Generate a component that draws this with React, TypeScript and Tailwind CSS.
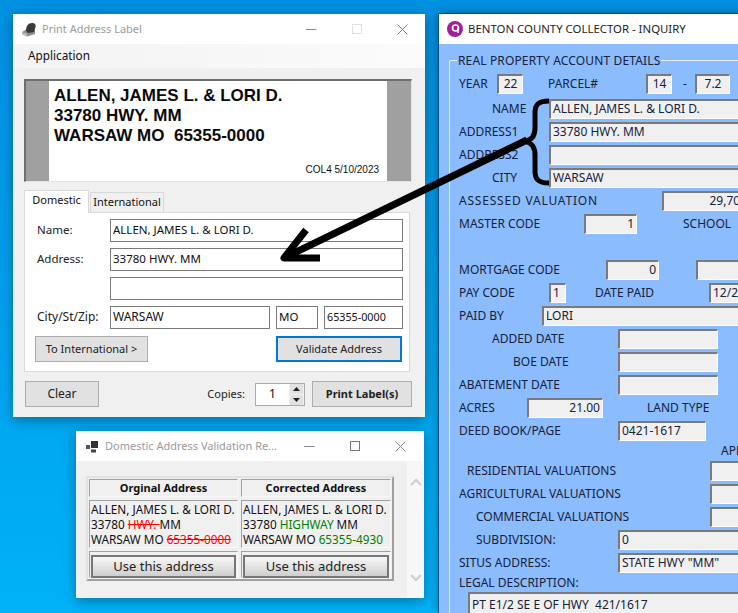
import React from 'react';

const ui = { fontFamily: '"Noto Sans", sans-serif' };
const arial = { fontFamily: '"Liberation Sans", sans-serif' };

const TitleButtons = ({ maxClass, gap }: { maxClass: string; gap: string }) => (
  <div className={`flex items-center ${gap}`}>
    <svg width="11" height="11" viewBox="0 0 11 11"><path d="M0 5.5H10.5" stroke="#8a8a8a" strokeWidth="1" /></svg>
    <div className={`h-[10px] w-[10px] border ${maxClass}`} />
    <svg width="11" height="11" viewBox="0 0 11 11"><path d="M0.5 0.5L10.5 10.5M10.5 0.5L0.5 10.5" stroke="#808080" strokeWidth="1" /></svg>
  </div>
);

const TextBox = ({ value, className }: { value?: string; className: string }) => (
  <div className={`flex h-[23px] items-center border border-[#7a7a7a] bg-white px-[2px] pb-px text-[#111] ${className}`}>{value}</div>
);

const Btn = ({ children, className }: { children: React.ReactNode; className: string }) => (
  <button className={`h-[26px] bg-[#e1e1e1] text-[#222] ${className}`}>{children}</button>
);

const LabelWindow = () => (
  <div style={ui} className="absolute left-[13px] top-[14px] flex h-[403px] w-[412px] flex-col bg-[#f0f0f0] shadow-[0_3px_12px_rgba(0,0,0,0.35)]">
    <div className="flex h-[30px] items-center justify-between bg-white pl-[8px] pr-[17px]">
      <div className="flex items-center gap-[5px]">
        <svg width="16" height="15" viewBox="0 0 16 15">
          <path d="M1 10L6 7L14 8.5V12L6 14.5L1 12Z" fill="#8c8c8c" />
          <path d="M5 9C5 4 7 1 11 1C14 1 15 3 14.5 5L13 10L7 11Z" fill="#3a3a3a" />
          <path d="M1 10L6 11.5V14.5L1 12Z" fill="#b5b5b5" />
        </svg>
        <span className="text-[11px] text-[#9a9a9a]">Print Address Label</span>
      </div>
      <TitleButtons maxClass="border-[#e2e2e2]" gap="gap-[35px]" />
    </div>
    <div className="flex h-[24px] items-center bg-gradient-to-r from-[#f3f3f3] to-[#fbfbfb] pl-[15px] text-[11.75px] text-[#111]">Application</div>

    <div className="mx-[11px] mt-[11px] flex h-[103px] w-[388px] border-b border-l-2 border-r border-t-2 border-b-[#e4e4e4] border-l-[#6e6e6e] border-r-[#e4e4e4] border-t-[#6e6e6e] bg-[#a0a0a0]">
      <div className="ml-[23px] flex w-[338px] flex-col bg-white pl-[5px] pr-[8px]" style={arial}>
        <div className="mt-[5px] text-[17px] font-bold leading-[20px] text-[#0a0a0a]">
          <div>ALLEN, JAMES L. &amp; LORI D.</div>
          <div>33780 HWY. MM</div>
          <div>WARSAW MO&nbsp; 65355-0000</div>
        </div>
        <div className="mb-[5px] mt-auto text-right text-[10px] leading-[12px] text-[#111]">COL4 5/10/2023</div>
      </div>
    </div>

    <div className="mx-[11px] mt-[8px] flex h-[22px] items-end text-[11px] text-[#111]">
      <div className="z-10 -mb-px flex h-[23px] w-[65px] items-center justify-center border border-b-0 border-[#d9d9d9] bg-white pb-[3px]">Domestic</div>
      <div className="ml-px flex h-[20px] w-[74px] items-center justify-center border border-b-0 border-[#d9d9d9] bg-[#f0f0f0]">International</div>
    </div>
    <div className="mx-[11px] flex h-[160px] w-[386px] flex-col gap-[6px] border border-[#d9d9d9] bg-white pl-[12px] pr-[6px] pt-[6px] text-[11.5px] text-[#222]">
      <div className="flex items-center">
        <span className="-mt-[2px] w-[73px]">Name:</span>
        <TextBox value="ALLEN, JAMES L. & LORI D." className="w-[293px]" />
      </div>
      <div className="flex items-center">
        <span className="-mt-[2px] w-[73px]">Address:</span>
        <TextBox value="33780 HWY. MM" className="w-[293px]" />
      </div>
      <div className="flex items-center">
        <span className="w-[73px]" />
        <TextBox className="w-[293px]" />
      </div>
      <div className="flex items-center">
        <span className="-mt-[2px] w-[73px] text-[12px]">City/St/Zip:</span>
        <TextBox value="WARSAW" className="w-[160px] text-[12px]" />
        <TextBox value="MO" className="ml-[6px] w-[42px]" />
        <TextBox value="65355-0000" className="ml-[6px] w-[79px] text-[10.75px]" />
      </div>
      <div className="-ml-[2px] mt-px flex justify-between pr-px text-[11px]">
        <Btn className="w-[113px] border border-[#adadad]">To International &gt;</Btn>
        <Btn className="w-[126px] border-2 border-[#0078d7]">Validate Address</Btn>
      </div>
    </div>

    <div className="ml-[12px] mr-[13px] mt-[9px] flex items-center">
      <Btn className="w-[74px] border border-[#adadad] text-[12px]">Clear</Btn>
      <span className="ml-auto text-[11px] text-[#222]">Copies:</span>
      <div className="ml-[10px] flex h-[23px] w-[50px] items-center border border-[#aaa] bg-white">
        <span className="w-[33px] text-center text-[12px] text-[#111]">1</span>
        <div className="ml-auto flex h-full w-[15px] flex-col justify-center gap-px bg-[#f0f0f0] px-px">
          <div className="flex h-[10px] items-center justify-center bg-[#e1e1e1]">
            <svg width="7" height="4" viewBox="0 0 7 4"><path d="M3.5 0L7 4H0Z" fill="#222" /></svg>
          </div>
          <div className="flex h-[10px] items-center justify-center bg-[#e1e1e1]">
            <svg width="7" height="4" viewBox="0 0 7 4"><path d="M0 0H7L3.5 4Z" fill="#222" /></svg>
          </div>
        </div>
      </div>
      <Btn className="ml-[7px] w-[100px] border border-[#adadad] text-[11px] font-bold">Print Label(s)</Btn>
    </div>
  </div>
);

const HeadCell = ({ children }: { children: React.ReactNode }) => (
  <div className="flex h-[18px] items-center justify-center border border-b-[#f8f8f8] border-l-[#a0a0a0] border-r-[#f8f8f8] border-t-[#a0a0a0] text-[11px] font-bold text-[#111]">{children}</div>
);

const AddressCell = ({ children }: { children: React.ReactNode }) => (
  <div className="h-[48px] whitespace-nowrap border border-b-[#f8f8f8] border-l-[#a0a0a0] border-r-[#f8f8f8] border-t-[#a0a0a0] pl-px pt-px text-[11.75px] leading-[15px] text-[#111]">{children}</div>
);

const UseButton = () => (
  <div className="h-[27px] border border-b-[#f8f8f8] border-l-[#a0a0a0] border-r-[#f8f8f8] border-t-[#a0a0a0] p-px">
    <button className="h-[23px] w-full border-2 border-[#777] bg-gradient-to-b from-[#f8f8f8] to-[#cfcfcf] text-[13px] text-[#222]">Use this address</button>
  </div>
);

const ValidationWindow = () => (
  <div style={ui} className="absolute left-[76px] top-[431px] flex h-[167px] w-[348px] flex-col bg-[#f0f0f0] shadow-[0_3px_12px_rgba(0,0,0,0.35)]">
    <div className="flex h-[30px] items-center justify-between bg-white pl-[10px] pr-[18px]">
      <div className="flex items-center gap-[6px]">
        <svg width="13" height="13" viewBox="0 0 13 13">
          <path d="M5 1H12V8H5Z" fill="#333" />
          <path d="M0 5H4V9H0Z" fill="#555" />
          <path d="M5 9.5H10V12.5H5Z" fill="#444" />
        </svg>
        <span className="text-[11px] text-[#9a9a9a]">Domestic Address Validation Re...</span>
      </div>
      <TitleButtons maxClass="border-[#777]" gap="gap-[35px]" />
    </div>
    <div className="flex flex-1">
      <div className="flex-1 pl-[10px] pt-[15px]">
        <div className="grid w-[308px] grid-cols-[149px_150px] gap-[3px] border-2 border-b-[#a0a0a0] border-l-[#e2e2e2] border-r-[#a0a0a0] border-t-[#e2e2e2] p-px">
          <HeadCell>Orginal Address</HeadCell>
          <HeadCell>Corrected Address</HeadCell>
          <AddressCell>
            <div>ALLEN, JAMES L. &amp; LORI D.</div>
            <div>33780 <span className="text-[#ff0000] line-through">HWY. </span>MM</div>
            <div>WARSAW MO <span className="text-[#ff0000] line-through">65355-0000</span></div>
          </AddressCell>
          <AddressCell>
            <div>ALLEN, JAMES L. &amp; LORI D.</div>
            <div>33780 <span className="text-[#008000]">HIGHWAY</span> MM</div>
            <div>WARSAW MO <span className="text-[#008000]">65355-4930</span></div>
          </AddressCell>
          <UseButton />
          <UseButton />
        </div>
      </div>
      <div className="flex w-[17px] flex-col items-center justify-between bg-[#f7f7f7] pb-[16px] pt-[17px]">
        <svg width="12" height="8" viewBox="0 0 12 8"><path d="M1 7L6 2L11 7" fill="none" stroke="#cdcdcd" strokeWidth="2" /></svg>
        <svg width="12" height="8" viewBox="0 0 12 8"><path d="M1 1L6 6L11 1" fill="none" stroke="#cdcdcd" strokeWidth="2" /></svg>
      </div>
    </div>
  </div>
);

const Inset = ({ value, className }: { value?: string; className: string }) => (
  <div className={`flex h-[20px] shrink-0 items-center overflow-hidden whitespace-pre border-b border-l-2 border-r border-t-2 border-b-white border-l-[#7a7a7a] border-r-white border-t-[#7a7a7a] bg-[#f0f0f0] px-[2px] ${className}`}>{value}</div>
);

const Row = ({ children }: { children: React.ReactNode }) => (
  <div className="flex h-[23px] items-center whitespace-nowrap">{children}</div>
);

const Lbl = ({ children, className }: { children?: React.ReactNode; className: string }) => (
  <span className={`shrink-0 ${className}`}>{children}</span>
);

const InquiryWindow = () => (
  <div style={ui} className="absolute left-[439px] top-[14px] h-[599px] w-[420px] overflow-hidden bg-[#8bbcfe] text-[12px] text-[#16213a] shadow-[0_0_0_1px_rgba(0,50,90,0.6),0_0_10px_rgba(0,0,0,0.45)]">
    <div className="flex h-[30px] items-center bg-white pl-[8px] text-[#222]">
      <svg width="16" height="16" viewBox="0 0 16 16">
        <circle cx="8" cy="8" r="8" fill="#a1209a" />
        <circle cx="8.5" cy="7" r="3" fill="none" stroke="#fff" strokeWidth="1.6" />
        <path d="M11 7V12" stroke="#fff" strokeWidth="1.6" />
      </svg>
      <span className="ml-[5px] text-[11.4px]">BENTON COUNTY COLLECTOR - INQUIRY</span>
    </div>
    <fieldset className="ml-[10px] mt-[9px] w-[400px] rounded-[2px] border border-[#e8eef8] pb-[40px] pl-[9px]">
      <legend className="-ml-[2px] px-px leading-[15px] tracking-[0.14px]">REAL PROPERTY ACCOUNT DETAILS</legend>
      <div className="pt-[4px]">
        <Row>
          <Lbl className="w-[38px]">YEAR</Lbl>
          <Inset value="22" className="w-[26px] justify-center" />
          <Lbl className="ml-[25px] w-[98px]">PARCEL#</Lbl>
          <Inset value="14" className="w-[26px] justify-center" />
          <Lbl className="w-[23px] pl-[3px] text-center">-</Lbl>
          <Inset value="7.2" className="w-[35px] justify-center" />
        </Row>
        <div className="h-[2px]" />
        <Row>
          <Lbl className="w-[90px] pl-[33px]">NAME</Lbl>
          <Inset value="ALLEN, JAMES L. & LORI D." className="w-[240px]" />
        </Row>
        <Row>
          <Lbl className="w-[90px]">ADDRESS1</Lbl>
          <Inset value="33780 HWY. MM" className="w-[240px]" />
        </Row>
        <Row>
          <Lbl className="w-[90px]">ADDRESS2</Lbl>
          <Inset className="w-[240px]" />
        </Row>
        <Row>
          <Lbl className="w-[90px] pl-[33px]">CITY</Lbl>
          <Inset value="WARSAW" className="w-[240px]" />
        </Row>
        <Row>
          <Lbl className="w-[203px] tracking-[0.8px]">ASSESSED VALUATION</Lbl>
          <Inset value="29,700" className="w-[88px] justify-end" />
        </Row>
        <Row>
          <Lbl className="w-[125px]">MASTER CODE</Lbl>
          <Inset value="1" className="w-[53px] justify-end" />
          <Lbl className="ml-[46px]">SCHOOL</Lbl>
        </Row>
        <div className="h-[23px]" />
        <Row>
          <Lbl className="w-[147px]">MORTGAGE CODE</Lbl>
          <Inset value="0" className="w-[53px] justify-end" />
          <Inset className="ml-[37px] w-[90px]" />
        </Row>
        <Row>
          <Lbl className="w-[90px]">PAY CODE</Lbl>
          <Inset value="1" className="w-[17px]" />
          <Lbl className="ml-[29px] w-[114px]">DATE PAID</Lbl>
          <Inset value="12/20/2022" className="w-[90px]" />
        </Row>
        <Row>
          <Lbl className="w-[83px]">PAID BY</Lbl>
          <Inset value="LORI" className="w-[250px]" />
        </Row>
        <Row>
          <Lbl className="w-[159px] pl-[33px]">ADDED DATE</Lbl>
          <Inset className="w-[100px]" />
        </Row>
        <Row>
          <Lbl className="w-[159px] pl-[54px]">BOE DATE</Lbl>
          <Inset className="w-[100px]" />
        </Row>
        <Row>
          <Lbl className="w-[159px]">ABATEMENT DATE</Lbl>
          <Inset className="w-[100px]" />
        </Row>
        <Row>
          <Lbl className="w-[68px]">ACRES</Lbl>
          <Inset value="21.00" className="w-[76px] justify-end" />
          <Lbl className="ml-[44px]">LAND TYPE</Lbl>
        </Row>
        <Row>
          <Lbl className="w-[159px]">DEED BOOK/PAGE</Lbl>
          <Inset value="0421-1617" className="w-[88px]" />
        </Row>
        <div className="flex h-[17px] items-center pl-[262px]">APPRAISED</div>
        <Row>
          <Lbl className="w-[251px] pl-[8px]">RESIDENTIAL VALUATIONS</Lbl>
          <Inset className="w-[60px]" />
        </Row>
        <Row>
          <Lbl className="w-[251px]">AGRICULTURAL VALUATIONS</Lbl>
          <Inset className="w-[60px]" />
        </Row>
        <Row>
          <Lbl className="w-[251px] pl-[17px]">COMMERCIAL VALUATIONS</Lbl>
          <Inset className="w-[60px]" />
        </Row>
        <Row>
          <Lbl className="w-[159px] pl-[17px]">SUBDIVISION:</Lbl>
          <Inset value="0" className="w-[200px]" />
        </Row>
        <Row>
          <Lbl className="w-[159px]">SITUS ADDRESS:</Lbl>
          <Inset value="STATE HWY &quot;MM&quot;" className="w-[200px]" />
        </Row>
        <div className="flex h-[18px] items-center">LEGAL DESCRIPTION:</div>
        <Inset value="PT E1/2 SE E OF HWY  421/1617" className="ml-[9px] h-[24px] w-[320px]" />
      </div>
    </fieldset>
  </div>
);

export default function App() {
  return (
    <div className="relative h-[613px] w-[738px] overflow-hidden bg-gradient-to-b from-[#0090e2] to-[#00b2f8]">
      <LabelWindow />
      <ValidationWindow />
      <InquiryWindow />
      {/* arrow and brace drawn over the windows */}
      <svg className="pointer-events-none absolute left-0 top-0" width="738" height="613" viewBox="0 0 738 613" fill="none">
        <path d="M549 101C538 101 535 105 535 113V128C535 136 532 140 525 141C532 143 535 147 535 155V171C535 179 538 183 549 183" stroke="#000" strokeWidth="5" />
        <path d="M527 140L288 256" stroke="#000" strokeWidth="7" />
        <path d="M306 230L284 258L320 258" stroke="#000" strokeWidth="7" strokeLinejoin="round" />
      </svg>
    </div>
  );
}
